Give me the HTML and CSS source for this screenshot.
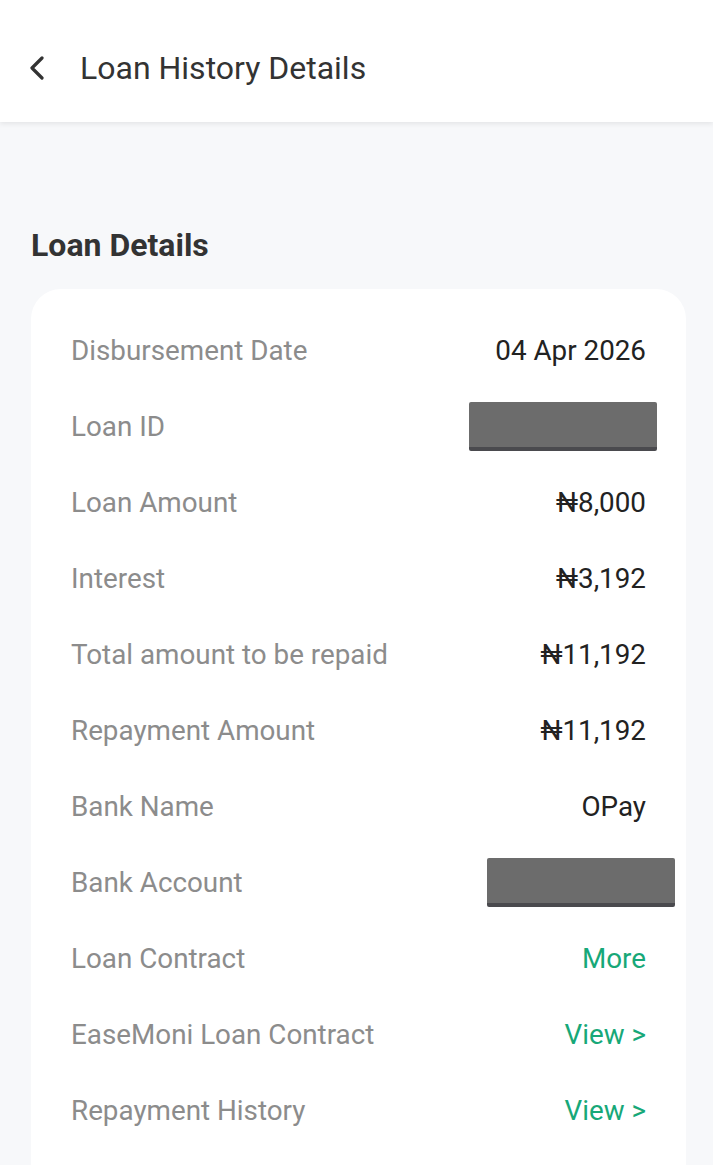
FILE: index.html
```html
<!DOCTYPE html>
<html lang="en">
  <head>
    <meta charset="UTF-8" />
    <meta name="viewport" content="width=device-width, initial-scale=1.0" />
    <title>Loan History Details</title>
    <link rel="stylesheet" href="styles.css">
  </head>
  <body>
    <header class="topbar">
      <span class="back">
        <svg width="18" height="24" viewBox="0 0 18 24"><path d="M14 2 L4 12 L14 22" fill="none" stroke="#333" stroke-width="3.2" stroke-linecap="round" stroke-linejoin="round"/></svg>
      </span>
      <h1>Loan History Details</h1>
    </header>

    <main class="content">
      <h2 class="section-title">Loan Details</h2>
      <div class="card">
        <div class="row"><span class="label">Disbursement Date</span><span class="value">04 Apr 2026</span></div>
        <div class="row"><span class="label">Loan ID</span><span class="redact redact-id"></span></div>
        <div class="row"><span class="label">Loan Amount</span><span class="value">₦8,000</span></div>
        <div class="row"><span class="label">Interest</span><span class="value">₦3,192</span></div>
        <div class="row"><span class="label">Total amount to be repaid</span><span class="value">₦11,192</span></div>
        <div class="row"><span class="label">Repayment Amount</span><span class="value">₦11,192</span></div>
        <div class="row"><span class="label">Bank Name</span><span class="value">OPay</span></div>
        <div class="row"><span class="label">Bank Account</span><span class="redact redact-acct"></span></div>
        <div class="row"><span class="label">Loan Contract</span><span class="value link">More</span></div>
        <div class="row"><span class="label">EaseMoni Loan Contract</span><span class="value link">View &gt;</span></div>
        <div class="row"><span class="label">Repayment History</span><span class="value link">View &gt;</span></div>
      </div>
    </main>
  </body>
</html>
```

FILE: styles.css
```css
/* general */
body {
    margin: 0;
    font-family: Roboto, "Liberation Sans", Arial, sans-serif;
    background-color: #f7f8fa;
    color: #222;
}

.topbar {
    height: 122px;
    background-color: #ffffff;
    display: flex;
    align-items: center;
    padding: 14px 0 0 28px;
    box-shadow: 0 2px 5px rgba(0, 0, 0, 0.08);
    box-sizing: border-box;
}

.back {
    display: flex;
    width: 52px;
}

.topbar h1 {
    margin: 0;
    font-size: 32px;
    font-weight: 400;
    color: #333;
}

.content {
    padding: 104px 27px 0 31px;
}

.section-title {
    margin: 0 0 25px 0;
    font-size: 32px;
    font-weight: 700;
    color: #333;
}

.card {
    background-color: #ffffff;
    border-radius: 30px 30px 0 0;
    padding: 23px 40px 20px 40px;
}

.row {
    height: 76px;
    display: flex;
    align-items: center;
    justify-content: space-between;
    font-size: 27.8px;
}

.label {
    color: #8c8c8c;
}

.value {
    color: #222;
}

.link {
    color: #17a878;
}

/* hidden numbers */
.redact {
    width: 188px;
    height: 49px;
    background-color: #6c6c6c;
    border-bottom: 4px solid #4a4a4e;
    box-sizing: border-box;
    border-radius: 2px;
}

.redact-id {
    margin-right: -11px;
}

.redact-acct {
    margin-right: -29px;
}
```
